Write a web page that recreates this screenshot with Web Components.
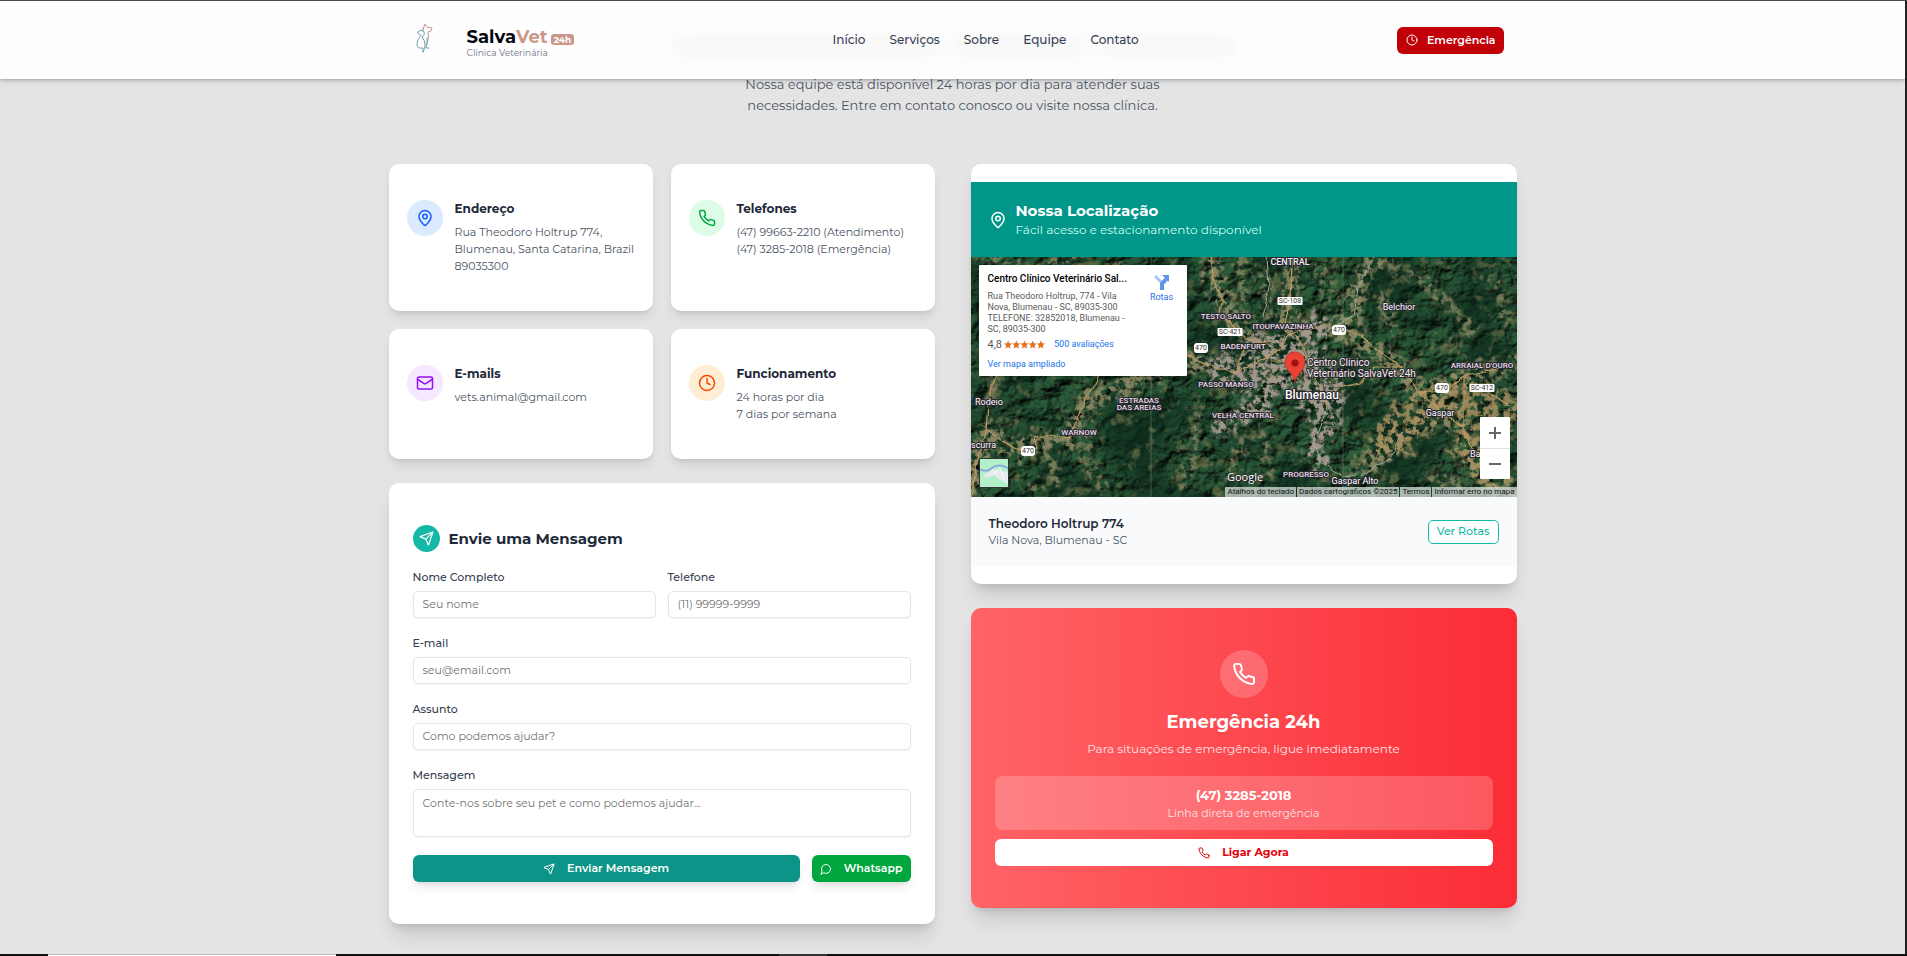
<!DOCTYPE html>
<html lang="pt-BR">
<head>
<meta charset="utf-8">
<meta name="viewport" content="width=device-width, initial-scale=1">
<title>SalvaVet 24h - Contato</title>
<style>
  * { box-sizing: border-box; }
  html, body { height: 100%; margin: 0; }
  body {
    font-family: Montserrat, Inter, "Open Sans", sans-serif;
    font-size: 12px;
    line-height: 18px;
    color: #1e2939;
    background: #e4e4e4;
    overflow: hidden;
  }
</style>
</head>
<body>
<sv-page></sv-page>

<script>
const icons = {
  pin: '<path d="M20 10c0 4.993-5.539 10.193-7.399 11.799a1 1 0 0 1-1.202 0C9.539 20.193 4 14.993 4 10a8 8 0 0 1 16 0"/><circle cx="12" cy="10" r="3"/>',
  phone: '<path d="M22 16.92v3a2 2 0 0 1-2.18 2 19.79 19.79 0 0 1-8.63-3.07 19.5 19.5 0 0 1-6-6 19.79 19.79 0 0 1-3.07-8.67A2 2 0 0 1 4.11 2h3a2 2 0 0 1 2 1.72 12.84 12.84 0 0 0 .7 2.81 2 2 0 0 1-.45 2.11L8.09 9.91a16 16 0 0 0 6 6l1.27-1.27a2 2 0 0 1 2.11-.45 12.84 12.84 0 0 0 2.81.7A2 2 0 0 1 22 16.92z"/>',
  mail: '<rect x="2" y="4" width="20" height="16" rx="2"/><path d="m22 7-8.97 5.7a1.94 1.94 0 0 1-2.06 0L2 7"/>',
  clock: '<circle cx="12" cy="12" r="10"/><path d="M12 6v6l4 2"/>',
  send: '<path d="M14.536 21.686a.5.5 0 0 0 .937-.024l6.5-19a.496.496 0 0 0-.635-.635l-19 6.5a.5.5 0 0 0-.024.937l7.93 3.18a2 2 0 0 1 1.112 1.11z"/><path d="m21.854 2.147-10.94 10.939"/>',
  chat: '<path d="M7.9 20A9 9 0 1 0 4 16.1L2 22Z"/>'
};

const base = `
  *, *::before, *::after { box-sizing: border-box; }
  h2, h3, p { margin: 0; }
  button, input, textarea { font: inherit; }
  a { text-decoration: none; color: inherit; }
`;

function define(name, css, html) {
  customElements.define(name, class extends HTMLElement {
    constructor() {
      super();
      this.attachShadow({ mode: 'open' }).innerHTML = `<style>${base}${css}</style>${html}`;
    }
  });
}

customElements.define('sv-icon', class extends HTMLElement {
  connectedCallback() {
    if (this.shadowRoot) return;
    this.attachShadow({ mode: 'open' }).innerHTML = `
      <style>
        :host { display: block; flex: none; width: var(--size, 18px); height: var(--size, 18px); }
        svg { display: block; width: 100%; height: 100%; }
      </style>
      <svg viewBox="0 0 24 24" fill="none" stroke="currentColor" stroke-width="2" stroke-linecap="round" stroke-linejoin="round" aria-hidden="true">${icons[this.getAttribute('name')]}</svg>`;
  }
});

define('sv-header', `
  :host {
    display: block; position: absolute; inset: 0 0 auto 0; z-index: 5;
    background: #fefefe; box-shadow: 0 1px 3px rgba(0,0,0,.2), 0 2px 6px rgba(0,0,0,.12);
  }
  .glow {
    position: absolute; left: 50%; top: 38px; width: 560px; height: 14px; margin-left: -280px;
    display: flex; gap: 16px; filter: blur(8px);
  }
  .glow i { background: #f4f4f4; flex: 1; }
  .glow i:first-child { flex: 2; }
  .bar {
    position: relative; display: flex; align-items: center; justify-content: space-between;
    max-width: 1128px; height: 78px; margin: 0 auto; padding: 0 13px 0 12px;
  }
  .brand { display: flex; align-items: center; gap: 18px; }
  .logo { display: block; width: 48px; height: 48px; }
  .name { display: flex; align-items: center; gap: 3px; font-size: 18px; line-height: 21px; font-weight: 700; color: #030712; padding-top: 3px; }
  .name b { color: #cb978a; font-weight: 700; }
  .name small {
    font-size: 9px; line-height: 11px; font-weight: 700; color: #fff; background: #cb978a;
    border-radius: 3px; padding: 0 3px; margin-top: 5px;
  }
  .sub { font-size: 9px; line-height: 9px; color: #6a7282; }
  nav { display: flex; gap: 24px; font-weight: 500; color: #364153; }
  button {
    display: flex; align-items: center; gap: 9px; height: 27px; padding: 0 8px 0 9px;
    border: 0; border-radius: 6px; background: #c10007; color: #fff;
    font-size: 11px; line-height: 15px; font-weight: 600; --size: 12px;
  }
`, `
  <div class="glow"><i></i><i></i><i></i></div>
  <div class="bar">
    <div class="brand">
      <svg class="logo" viewBox="0 0 48 48" fill="none" stroke-width="1" stroke-linecap="round" stroke-linejoin="round" aria-label="SalvaVet" role="img">
        <g stroke="#b99a94">
          <path d="M22 13 L24 8 L26 11 L31 12 L30 15 L27 16 Q28 20 27 24 L25 29"/>
          <path d="M22 13 Q22 15 23 16"/>
        </g>
        <g stroke="#6fa3ad">
          <path d="M17 16 Q19 13 22 15 Q25 18 21 21 Q24 24 24 29 Q24 33 22 36"/>
          <path d="M17 16 Q16 19 20 19 M20 20 Q16 23 16 28 Q16 33 22 32 L22 36"/>
          <path d="M26 22 Q27 27 25 32 L28 32"/>
        </g>
      </svg>
      <div>
        <div class="name"><span>Salva<b>Vet</b></span><small>24h</small></div>
        <div class="sub">Clínica Veterinária</div>
      </div>
    </div>
    <nav>
      <a href="#inicio">Início</a><a href="#servicos">Serviços</a><a href="#sobre">Sobre</a><a href="#equipe">Equipe</a><a href="#contato">Contato</a>
    </nav>
    <button type="button"><sv-icon name="clock"></sv-icon>Emergência</button>
  </div>
`);

define('sv-info-card', `
  :host {
    display: flex; gap: 12px; padding: 36px 18px; background: #fff; border-radius: 10px;
    box-shadow: 0 7px 11px -2px rgba(0,0,0,.1), 0 3px 5px -3px rgba(0,0,0,.12);
  }
  .dot {
    display: grid; place-items: center; flex: none; width: 36px; height: 36px; border-radius: 50%;
    background: var(--tint); color: var(--ink);
  }
  h3 { font-size: 12px; line-height: 18px; font-weight: 700; margin-bottom: 6px; }
  p { font-size: 11px; line-height: 17px; color: #4a5565; }
`, `
  <div class="dot"><slot name="icon"></slot></div>
  <div><h3><slot name="title"></slot></h3><p><slot></slot></p></div>
`);

define('sv-message-form', `
  :host {
    display: block; padding: 42px 24px; background: #fff; border-radius: 10px;
    box-shadow: 0 15px 19px -4px rgba(0,0,0,.12), 0 6px 8px -4px rgba(0,0,0,.12);
  }
  form { display: grid; gap: 18px; }
  header { display: flex; align-items: center; gap: 9px; }
  .dot {
    display: grid; place-items: center; width: 27px; height: 27px; border-radius: 50%;
    background: #14b8a6; color: #fff; --size: 15px;
  }
  h2 { font-size: 15px; line-height: 21px; font-weight: 700; }
  .pair { display: grid; grid-template-columns: 1fr 1fr; gap: 12px; }
  .field { display: grid; gap: 6px; }
  label { font-size: 11px; line-height: 15px; font-weight: 500; color: #364153; }
  input, textarea {
    display: block; width: 100%; height: 27px; padding: 0 9px; border: 1px solid #e5e5e5; border-radius: 5px;
    background: #fff; font-size: 11px; line-height: 15px; resize: none; outline: 0;
    box-shadow: 0 1px 2px rgba(0,0,0,.05);
  }
  input { padding-bottom: 2px; }
  textarea { height: 48px; padding: 6px 9px; }
  ::placeholder { color: #737373; opacity: 1; }
  .actions { display: flex; gap: 12px; }
  button {
    display: flex; align-items: center; justify-content: center; gap: 12px; height: 27px; padding: 0 8px;
    border: 0; border-radius: 6px; color: #fff; background: #00a63e;
    font-size: 11px; line-height: 15px; font-weight: 600; --size: 12px;
    box-shadow: 0 7px 11px -2px rgba(0,0,0,.1), 0 3px 5px -3px rgba(0,0,0,.1);
  }
  .send { flex: 1; background: #0d9488; }
`, `
  <form onsubmit="return false">
    <header><div class="dot"><sv-icon name="send"></sv-icon></div><h2>Envie uma Mensagem</h2></header>
    <div class="pair">
      <div class="field"><label for="name">Nome Completo</label><input id="name" type="text" placeholder="Seu nome"></div>
      <div class="field"><label for="tel">Telefone</label><input id="tel" type="tel" placeholder="(11) 99999-9999"></div>
    </div>
    <div class="field"><label for="mail">E-mail</label><input id="mail" type="email" placeholder="seu@email.com"></div>
    <div class="field"><label for="subject">Assunto</label><input id="subject" type="text" placeholder="Como podemos ajudar?"></div>
    <div class="field"><label for="msg">Mensagem</label><textarea id="msg" placeholder="Conte-nos sobre seu pet e como podemos ajudar..."></textarea></div>
    <div class="actions">
      <button class="send" type="submit"><sv-icon name="send"></sv-icon>Enviar Mensagem</button>
      <button type="button"><sv-icon name="chat"></sv-icon>Whatsapp</button>
    </div>
  </form>
`);

const place = (x, y, t, cls = 'area', anchor = 'middle') => `<text class="${cls}" x="${x}" y="${y}" text-anchor="${anchor}" dominant-baseline="central">${t}</text>`;
const shield = (x, y, t) => {
  const w = t.length > 3 ? 25 : 14;
  return `<rect x="${x - w / 2}" y="${y - 5}" width="${w}" height="${t.length > 3 ? 8 : 10}" rx="${t.length > 3 ? 1 : 3}" fill="#fff"/>
    <text class="road" x="${x}" y="${y - (t.length > 3 ? 1 : 0)}" text-anchor="middle" dominant-baseline="central">${t}</text>`;
};

define('sv-satellite-map', `
  :host { display: block; position: relative; height: 240px; overflow: hidden; background: #1e3f2a; font-family: Roboto, sans-serif; }
  .ground { display: block; width: 100%; height: 100%; }
  text { font-family: Roboto, sans-serif; fill: #fff; paint-order: stroke; stroke: #2a2630; stroke-width: 2px; stroke-linejoin: round; }
  .area { font-size: 8px; font-weight: 500; fill: #e4dfe6; }
  .wide { font-size: 9px; font-weight: 500; fill: #eee; }
  .town { font-size: 9px; }
  .city { font-size: 12px; font-weight: 500; }
  .place { font-size: 10px; fill: #f6eeee; }
  .road { font-size: 7px; fill: #333; stroke: none; }
  .info {
    position: absolute; left: 8px; top: 8px; width: 208px; height: 111px; padding: 8px 9px; background: #fff;
    display: flex; justify-content: space-between; color: #5b5b5b; font-size: 9px; line-height: 11px;
    border-radius: 1px; box-shadow: 0 1px 3px rgba(0,0,0,.3);
  }
  .info h3 { font-size: 10px; line-height: 12px; font-weight: 500; color: #000; margin-bottom: 6px; white-space: nowrap; }
  .info .addr { width: 140px; }
  .info a { color: #1a73e8; }
  .rate { display: flex; align-items: center; margin: 4px 0 9px; }
  .rate span { font-size: 11px; }
  .rate svg { width: 41px; height: 9px; margin: 0 9px 0 2px; }
  .routes { width: 30px; text-align: center; margin-right: 1px; }
  .routes svg { display: block; width: 16px; height: 16px; margin: 1px auto 2px; }
  .zoom { position: absolute; right: 7px; bottom: 18px; width: 30px; background: #fff; border-radius: 1px; }
  .zoom button { display: grid; place-items: center; width: 30px; height: 31px; padding: 0; border: 0; background: none; }
  .zoom button + button { box-shadow: inset 0 1px #e2e2e2; }
  .zoom svg { width: 12px; height: 12px; }
  .layer { position: absolute; left: 8px; bottom: 9px; width: 30px; height: 30px; padding: 0; border: 1px solid #333; background: #b1f0cb; }
  .layer svg { display: block; width: 28px; height: 28px; }
  .legal {
    position: absolute; right: 0; bottom: 0; display: flex; height: 10px; font-size: 8px; line-height: 10px; color: #111;
  }
  .legal > * { padding: 0 2px; background: rgba(225,232,228,.72); white-space: nowrap; }
  .legal > * + * { margin-left: 1px; }
`, `
  <svg class="ground" viewBox="0 0 546 240" preserveAspectRatio="xMidYMid slice" role="img" aria-label="Mapa de satélite de Blumenau">
    <defs>
      <filter id="relief" x="0" y="0" width="100%" height="100%" color-interpolation-filters="sRGB">
        <feTurbulence type="fractalNoise" baseFrequency=".06 .075" numOctaves="5" seed="8"/>
        <feDiffuseLighting surfaceScale="7" lighting-color="#2d5f3c"><feDistantLight azimuth="225" elevation="50"/></feDiffuseLighting>
      </filter>
      <filter id="shade" x="0" y="0" width="100%" height="100%" color-interpolation-filters="sRGB">
        <feTurbulence type="fractalNoise" baseFrequency=".015" numOctaves="3" seed="21"/>
        <feColorMatrix values="0 0 0 0 .05  0 0 0 0 .17  0 0 0 0 .11  2.2 0 0 0 -.9"/>
      </filter>
      <filter id="specks" x="0" y="0" width="100%" height="100%" color-interpolation-filters="sRGB">
        <feTurbulence type="fractalNoise" baseFrequency=".07" numOctaves="4" seed="14"/>
        <feColorMatrix values="0 0 0 0 .50  0 0 0 0 .50  0 0 0 0 .32  0 6 0 0 -3.6"/>
      </filter>
      <filter id="cleared" x="-10%" y="-10%" width="120%" height="120%" color-interpolation-filters="sRGB">
        <feTurbulence type="fractalNoise" baseFrequency=".15" numOctaves="4" seed="5" result="n"/>
        <feColorMatrix in="n" values="0 0 0 0 1  0 0 0 0 1  0 0 0 0 1  0 6 0 0 -2.5" result="m"/>
        <feDisplacementMap in="SourceGraphic" in2="n" scale="26" xChannelSelector="R" yChannelSelector="B"/>
        <feGaussianBlur stdDeviation="1"/>
        <feComposite operator="in" in2="m"/>
      </filter>
      <filter id="wobble" x="-5%" y="-5%" width="110%" height="110%">
        <feTurbulence type="fractalNoise" baseFrequency=".09" numOctaves="2" seed="3"/>
        <feDisplacementMap in="SourceGraphic" scale="5" xChannelSelector="R" yChannelSelector="G"/>
      </filter>
    </defs>
    <rect width="546" height="240" filter="url(#relief)"/>
    <rect width="546" height="240" filter="url(#shade)"/>
    <rect width="546" height="240" filter="url(#specks)" opacity=".55"/>
    <g filter="url(#cleared)" fill="none" stroke="#96906a" stroke-linecap="round" stroke-linejoin="round">
      <g stroke-width="19" opacity=".85">
        <path d="M-5 235 L18 173 L45 195 L64 182 L98 183 L120 140 L150 132 L170 120 L216 100 L245 112 L290 105"/>
        <path d="M240 0 L243 28 L262 60 L290 85 M321 0 L318 65 M403 0 L387 31 L382 60 L360 75"/>
        <path d="M368 70 L430 110 L447 135 L494 120 L546 105 M447 135 L492 170 L505 210 L540 235"/>
        <path d="M400 210 L430 175 L470 160"/>
      </g>
      <g stroke-width="10" opacity=".75">
        <path d="M20 0 L60 14 L110 0 M18 146 L25 118 M75 195 L86 225 M118 180 L112 205 L130 232 M225 150 L226 190 L212 225 M270 180 L262 215 M60 232 L70 240"/>
        <path d="M420 10 L455 25 L500 70 L480 90 M270 0 L275 40 M350 10 L365 45 M295 20 L300 60 M410 40 L420 70 M520 20 L535 60"/>
        <path d="M380 215 L400 190 L440 195 M460 220 L490 225 M140 0 L150 12 M290 175 L300 215"/>
      </g>
      <g stroke="#a0968a">
        <path stroke-width="52" d="M300 100 L335 112 L350 135"/>
        <path stroke-width="30" d="M250 112 L300 120 L285 148 M345 70 L320 90 M350 140 L356 165"/>
        <path stroke-width="18" d="M354 160 L343 195 L350 205 M248 172 L285 150"/>
      </g>
      <g stroke="#a89160" stroke-width="40" opacity=".85"><path d="M485 140 L530 150 L515 190 M455 150 L420 180 M520 215 L500 190"/></g>
    </g>
    <g filter="url(#wobble)" fill="none" stroke="#c09a60" stroke-width="1.2">
      <path d="M0 240 L6 205 L16 173 L30 183 L43 191 L57 195 L66 191 L63 180 L80 178 L98 181 L114 143 L129 118 M216 98 L243 110 L265 116 L291 103 L309 93 L316 78 L345 70 L368 68 L389 78 L414 98 L431 110 L447 135 L476 133 L494 118 L545 108"/>
      <path d="M240 0 L243 25 L251 45 L249 56 L275 80 L309 93 M321 0 L320 40 L314 65 L330 85 L338 110 L351 133 L356 150 M28 115 L20 130 L18 146 L16 173"/>
      <path d="M431 110 L403 110 L389 126 L360 133 M447 135 L469 153 L492 170 L496 183 L516 216 M492 120 L492 170 M515 133 L538 150 M265 116 L272 90 L300 84 M340 104 L300 103"/>
    </g>
    <g filter="url(#wobble)" fill="none" stroke="#a9a79b" stroke-width="1">
      <path d="M403 0 L387 31 L383 58 L360 72 M296 0 L298 30 L292 60 M356 150 L343 185 L350 205 L372 220 L385 218 M390 220 L420 200 L432 175"/>
    </g>
    <path d="M180 0V240 M372 0V240" stroke="#8b9a86" stroke-opacity=".45" stroke-width="1"/>
    ${shield(319, 45, 'SC-108')}${shield(259, 76, 'SC-421')}${shield(368, 73, '470')}${shield(230, 91, '470')}${shield(57, 194, '470')}${shield(471, 131, '470')}${shield(511, 132, 'SC-412')}
    ${place(319, 5, 'CENTRAL', 'wide')}${place(255, 59, 'TESTO SALTO')}${place(312, 69, 'ITOUPAVAZINHA')}${place(272, 89, 'BADENFURT')}
    ${place(255, 127, 'PASSO MANSO')}${place(272, 158, 'VELHA CENTRAL')}${place(168, 143, 'ESTRADAS')}${place(168, 150, 'DAS AREIAS')}
    ${place(108, 175, 'WARNOW')}${place(511, 108, "ARRAIAL D'OURO")}${place(335, 217, 'PROGRESSO')}
    ${place(428, 50, 'Belchior', 'town')}${place(18, 145, 'Rodeio', 'town')}${place(0, 188, 'scurra', 'town', 'start')}${place(469, 156, 'Gaspar', 'town')}${place(499, 197, 'Ba', 'town', 'start')}${place(384, 224, 'Gaspar Alto', 'town')}
    ${place(341, 138, 'Blumenau', 'city')}
    ${place(336, 105, 'Centro Clínico', 'place', 'start')}${place(336, 116, 'Veterinário SalvaVet 24h', 'place', 'start')}
    <text x="256" y="224" style="font: 500 11px 'Open Sans', sans-serif; stroke-width: 1px">Google</text>
    <path d="M324 125 C323 117 314 114 314 105 A10 10 0 0 1 334 105 C334 114 325 117 324 125Z" fill="#ea4335" stroke="#c5221f" stroke-width=".6"/>
    <circle cx="324" cy="106" r="3.6" fill="#a50e0e"/>
  </svg>
  <div class="info">
    <div class="addr">
      <h3>Centro Clínico Veterinário Sal...</h3>
      Rua Theodoro Holtrup, 774 - Vila<br>Nova, Blumenau - SC, 89035-300<br>TELEFONE: 32852018, Blumenau -<br>SC, 89035-300
      <div class="rate"><span>4,8</span>
        <svg viewBox="0 0 50 10" fill="#e7711b" aria-hidden="true"><defs><path id="star" d="M5 0 6.4 3.4 10 3.8 7.3 6.2 8.1 9.8 5 7.9 1.9 9.8 2.7 6.2 0 3.8 3.6 3.4Z"/></defs><use href="#star"/><use href="#star" x="10"/><use href="#star" x="20"/><use href="#star" x="30"/><use href="#star" x="40"/></svg>
        <a href="#avaliacoes">500 avaliações</a></div>
      <a href="#mapa">Ver mapa ampliado</a>
    </div>
    <a class="routes" href="#rotas">
      <svg viewBox="0 0 16 16" fill="none" aria-hidden="true"><path d="M1 2 L7 8" stroke="#a6c5f5" stroke-width="3"/><path d="M8 16V9.5L12.5 5" stroke="#5f97e8" stroke-width="4"/><path d="M8 1H15V8Z" fill="#5f97e8"/></svg>
      Rotas</a>
  </div>
  <div class="zoom">
    <button type="button" aria-label="Aumentar zoom"><svg viewBox="0 0 12 12"><path d="M6 0V12M0 6H12" stroke="#666" stroke-width="2"/></svg></button>
    <button type="button" aria-label="Diminuir zoom"><svg viewBox="0 0 12 12"><path d="M0 6H12" stroke="#666" stroke-width="2"/></svg></button>
  </div>
  <button class="layer" type="button" aria-label="Mostrar mapa">
    <svg viewBox="0 0 28 28"><path d="M3 17 L12 10 L28 13V25L20 21 14 16 6 19Z" fill="#e6eceb"/><path d="M0 10 Q7 14 12 9 T28 9" fill="none" stroke="#8fa9dc" stroke-width="2"/><path d="M13 15 20 9 24 20" fill="none" stroke="#fff"/></svg>
  </button>
  <div class="legal"><span>Atalhos do teclado</span><span>Dados cartográficos ©2025</span><a href="#termos">Termos</a><a href="#erro">Informar erro no mapa</a></div>
`);

define('sv-location-card', `
  :host {
    display: block; padding: 18px 0; background: #fff; border-radius: 10px;
    box-shadow: 0 15px 19px -4px rgba(0,0,0,.12), 0 6px 8px -4px rgba(0,0,0,.12);
  }
  header { display: flex; align-items: center; gap: 9px; padding: 18px; background: #009689; color: #fff; }
  h2 { font-size: 15px; line-height: 21px; font-weight: 700; }
  header p { font-size: 12px; line-height: 18px; color: #cbfbf1; }
  footer { display: flex; align-items: center; justify-content: space-between; padding: 18px; background: #f9fafb; }
  h3 { font-size: 12px; line-height: 18px; font-weight: 600; }
  footer p { font-size: 11px; line-height: 15px; color: #4a5565; }
  footer button {
    height: 24px; padding: 0 8px; border: 1px solid #14b8a6; border-radius: 5px; background: #fff; color: #14b8a6;
    font-size: 11px; line-height: 15px; font-weight: 500;
  }
`, `
  <header><sv-icon name="pin"></sv-icon><div><h2>Nossa Localização</h2><p>Fácil acesso e estacionamento disponível</p></div></header>
  <sv-satellite-map></sv-satellite-map>
  <footer><div><h3>Theodoro Holtrup 774</h3><p>Vila Nova, Blumenau - SC</p></div><button type="button">Ver Rotas</button></footer>
`);

define('sv-emergency-card', `
  :host {
    display: flex; flex-direction: column; padding: 42px 24px; text-align: center; color: #fff; border-radius: 10px;
    background: linear-gradient(to right, #ff6467, #fb2c36);
    box-shadow: 0 15px 19px -4px rgba(0,0,0,.12), 0 6px 8px -4px rgba(0,0,0,.12);
  }
  .dot {
    display: grid; place-items: center; align-self: center; width: 48px; height: 48px; margin-bottom: 12px;
    border-radius: 50%; background: rgba(255,255,255,.2); --size: 24px;
  }
  h2 { font-size: 18px; line-height: 24px; font-weight: 700; margin-bottom: 6px; }
  .lead { color: #ffe2e2; font-size: 12px; line-height: 18px; margin-bottom: 18px; }
  .line { padding: 9px; margin-bottom: 9px; border-radius: 8px; background: rgba(255,255,255,.2); }
  .line strong { display: block; font-size: 13px; line-height: 21px; font-weight: 700; }
  .line span { display: block; font-size: 11px; line-height: 15px; color: #ffe2e2; }
  button {
    display: flex; align-items: center; justify-content: center; gap: 12px; height: 27px; border: 0; border-radius: 6px;
    background: #fff; color: #e7000b; font-size: 11px; line-height: 15px; font-weight: 700; --size: 12px;
  }
`, `
  <div class="dot"><sv-icon name="phone"></sv-icon></div>
  <h2>Emergência 24h</h2>
  <p class="lead">Para situações de emergência, ligue imediatamente</p>
  <div class="line"><strong>(47) 3285-2018</strong><span>Linha direta de emergência</span></div>
  <button type="button"><sv-icon name="phone"></sv-icon>Ligar Agora</button>
`);

define('sv-page', `
  :host {
    display: flex; flex-direction: column; position: relative; height: 100vh; overflow: hidden;
    border-top: 1px solid #4a4a4a;
  }
  .view { flex: 1; position: relative; min-height: 0; overflow: hidden; border-right: 2px solid #222; }
  main { max-width: 1128px; margin: 0 auto; padding-top: 73px; }
  .intro { max-width: 450px; margin: 0 auto 48px; text-align: center; font-size: 13px; line-height: 21px; color: #4a5565; }
  .columns { display: grid; grid-template-columns: 1fr 1fr; gap: 36px; align-items: start; }
  .column { display: grid; gap: 24px; }
  .cards { display: grid; grid-template-columns: 1fr 1fr; gap: 18px; }
  .strip { display: flex; height: 2px; background: #111; }
  .strip i { height: 2px; }
  .strip .tab { width: 288px; margin-left: 48px; background: #fff; border-top: 1px solid #bbb; }
  .strip .mark { width: 48px; margin-left: 443px; background: #333; }
`, `
  <div class="view">
    <sv-header></sv-header>
    <main>
      <p class="intro">Nossa equipe está disponível 24 horas por dia para atender suas<br>necessidades. Entre em contato conosco ou visite nossa clínica.</p>
      <div class="columns">
        <div class="column">
          <div class="cards">
            <sv-info-card style="--tint:#dbeafe;--ink:#155dfc"><sv-icon slot="icon" name="pin"></sv-icon><span slot="title">Endereço</span>Rua Theodoro Holtrup 774,<br>Blumenau, Santa Catarina, Brazil<br>89035300</sv-info-card>
            <sv-info-card style="--tint:#dcfce7;--ink:#00a63e"><sv-icon slot="icon" name="phone"></sv-icon><span slot="title">Telefones</span>(47) 99663-2210 (Atendimento)<br>(47) 3285-2018 (Emergência)</sv-info-card>
            <sv-info-card style="--tint:#f3e8ff;--ink:#9810fa"><sv-icon slot="icon" name="mail"></sv-icon><span slot="title">E-mails</span>vets.animal@gmail.com</sv-info-card>
            <sv-info-card style="--tint:#ffedd4;--ink:#f54900"><sv-icon slot="icon" name="clock"></sv-icon><span slot="title">Funcionamento</span>24 horas por dia<br>7 dias por semana</sv-info-card>
          </div>
          <sv-message-form></sv-message-form>
        </div>
        <div class="column">
          <sv-location-card></sv-location-card>
          <sv-emergency-card></sv-emergency-card>
        </div>
      </div>
    </main>
  </div>
  <div class="strip"><i class="tab"></i><i class="mark"></i></div>
`);
</script>
</body>
</html>
